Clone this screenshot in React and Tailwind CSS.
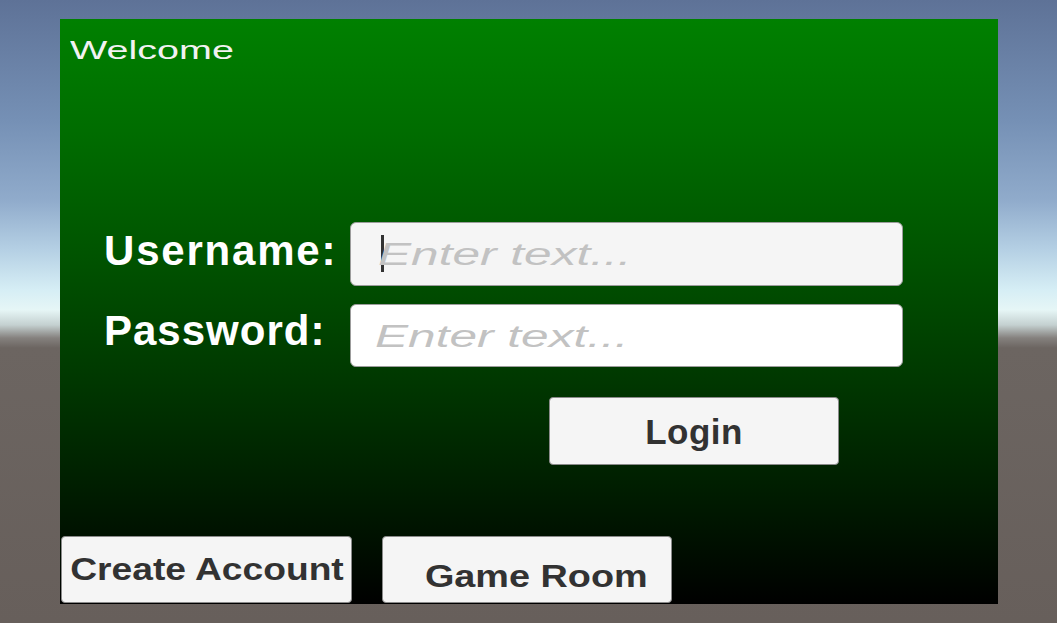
export default function App() {
  const font = "font-['Liberation_Sans',Arial,sans-serif]";
  return (
    <div
      className={`${font} w-[1057px] h-[623px] overflow-hidden bg-[linear-gradient(to_bottom,#5e7297_0px,#7590b5_120px,#90abcb_200px,#b5d0e4_250px,#d6eef5_290px,#e6f6f6_310px,#c4d0d0_325px,#85817e_338px,#6c6561_348px,#675f5b_623px)] pt-[19px] pl-[60px]`}
    >
      <div className="w-[938px] h-[585px] bg-[linear-gradient(to_bottom,#008000_0%,#006c00_20%,#005400_40%,#003a00_60%,#001e00_80%,#000000_100%)] flex flex-col">
        <div className="pt-[19px] pl-[10px] h-[44px]">
          <span className="inline-block origin-left scale-x-[1.58] text-[25px] leading-[25px] text-[#f2f2f2]">
            Welcome
          </span>
        </div>

        <div className="mt-[159px] ml-[44px] flex items-start">
          <div className="w-[246px] mt-[8px] text-[42px] leading-[42px] font-bold text-white tracking-[1.8px]">
            Username:
          </div>
          <div className="relative w-[553px] h-[64px] rounded-[6px] bg-[#f5f5f5] border border-[#9c9c9c]">
            <span className="absolute left-[30px] top-[12px] w-[3px] h-[37px] bg-[#323232]" />
            <div className="pl-[27px] pt-[16px]">
              <span className="inline-block origin-left scale-x-[1.6] italic text-[31px] leading-[31px] text-[#c2c2c2]">
                Enter text...
              </span>
            </div>
          </div>
        </div>

        <div className="mt-[18px] ml-[44px] flex items-start">
          <div className="w-[246px] mt-[6px] text-[42px] leading-[42px] font-bold text-white tracking-[1px]">
            Password:
          </div>
          <div className="w-[553px] h-[63px] rounded-[6px] bg-white border border-[#9c9c9c]">
            <div className="pl-[24px] pt-[16px]">
              <span className="inline-block origin-left scale-x-[1.6] italic text-[31px] leading-[31px] text-[#c2c2c2]">
                Enter text...
              </span>
            </div>
          </div>
        </div>

        <div className="mt-[30px] ml-[489px]">
          <button className="w-[290px] h-[68px] rounded-[4px] bg-[#f5f5f5] border border-[#8a8a8a] flex items-center justify-center text-[35px] leading-[35px] font-bold text-[#323232] tracking-[0.5px]">
            Login
          </button>
        </div>

        <div className="mt-[71px] ml-[1px] flex gap-[30px]">
          <button className="w-[291px] h-[67px] rounded-[4px] bg-[#f5f5f5] border border-[#8a8a8a] flex items-center justify-center">
            <span className="inline-block scale-x-[1.2] text-[31px] leading-[31px] font-bold text-[#323232] whitespace-nowrap">
              Create Account
            </span>
          </button>
          <button className="w-[290px] h-[67px] rounded-[4px] bg-[#f5f5f5] border border-[#8a8a8a] flex items-center justify-center">
            <span className="inline-block translate-x-[9px] translate-y-[7px] scale-x-[1.22] text-[31px] leading-[31px] font-bold text-[#323232] whitespace-nowrap">
              Game Room
            </span>
          </button>
        </div>
      </div>
    </div>
  );
}
